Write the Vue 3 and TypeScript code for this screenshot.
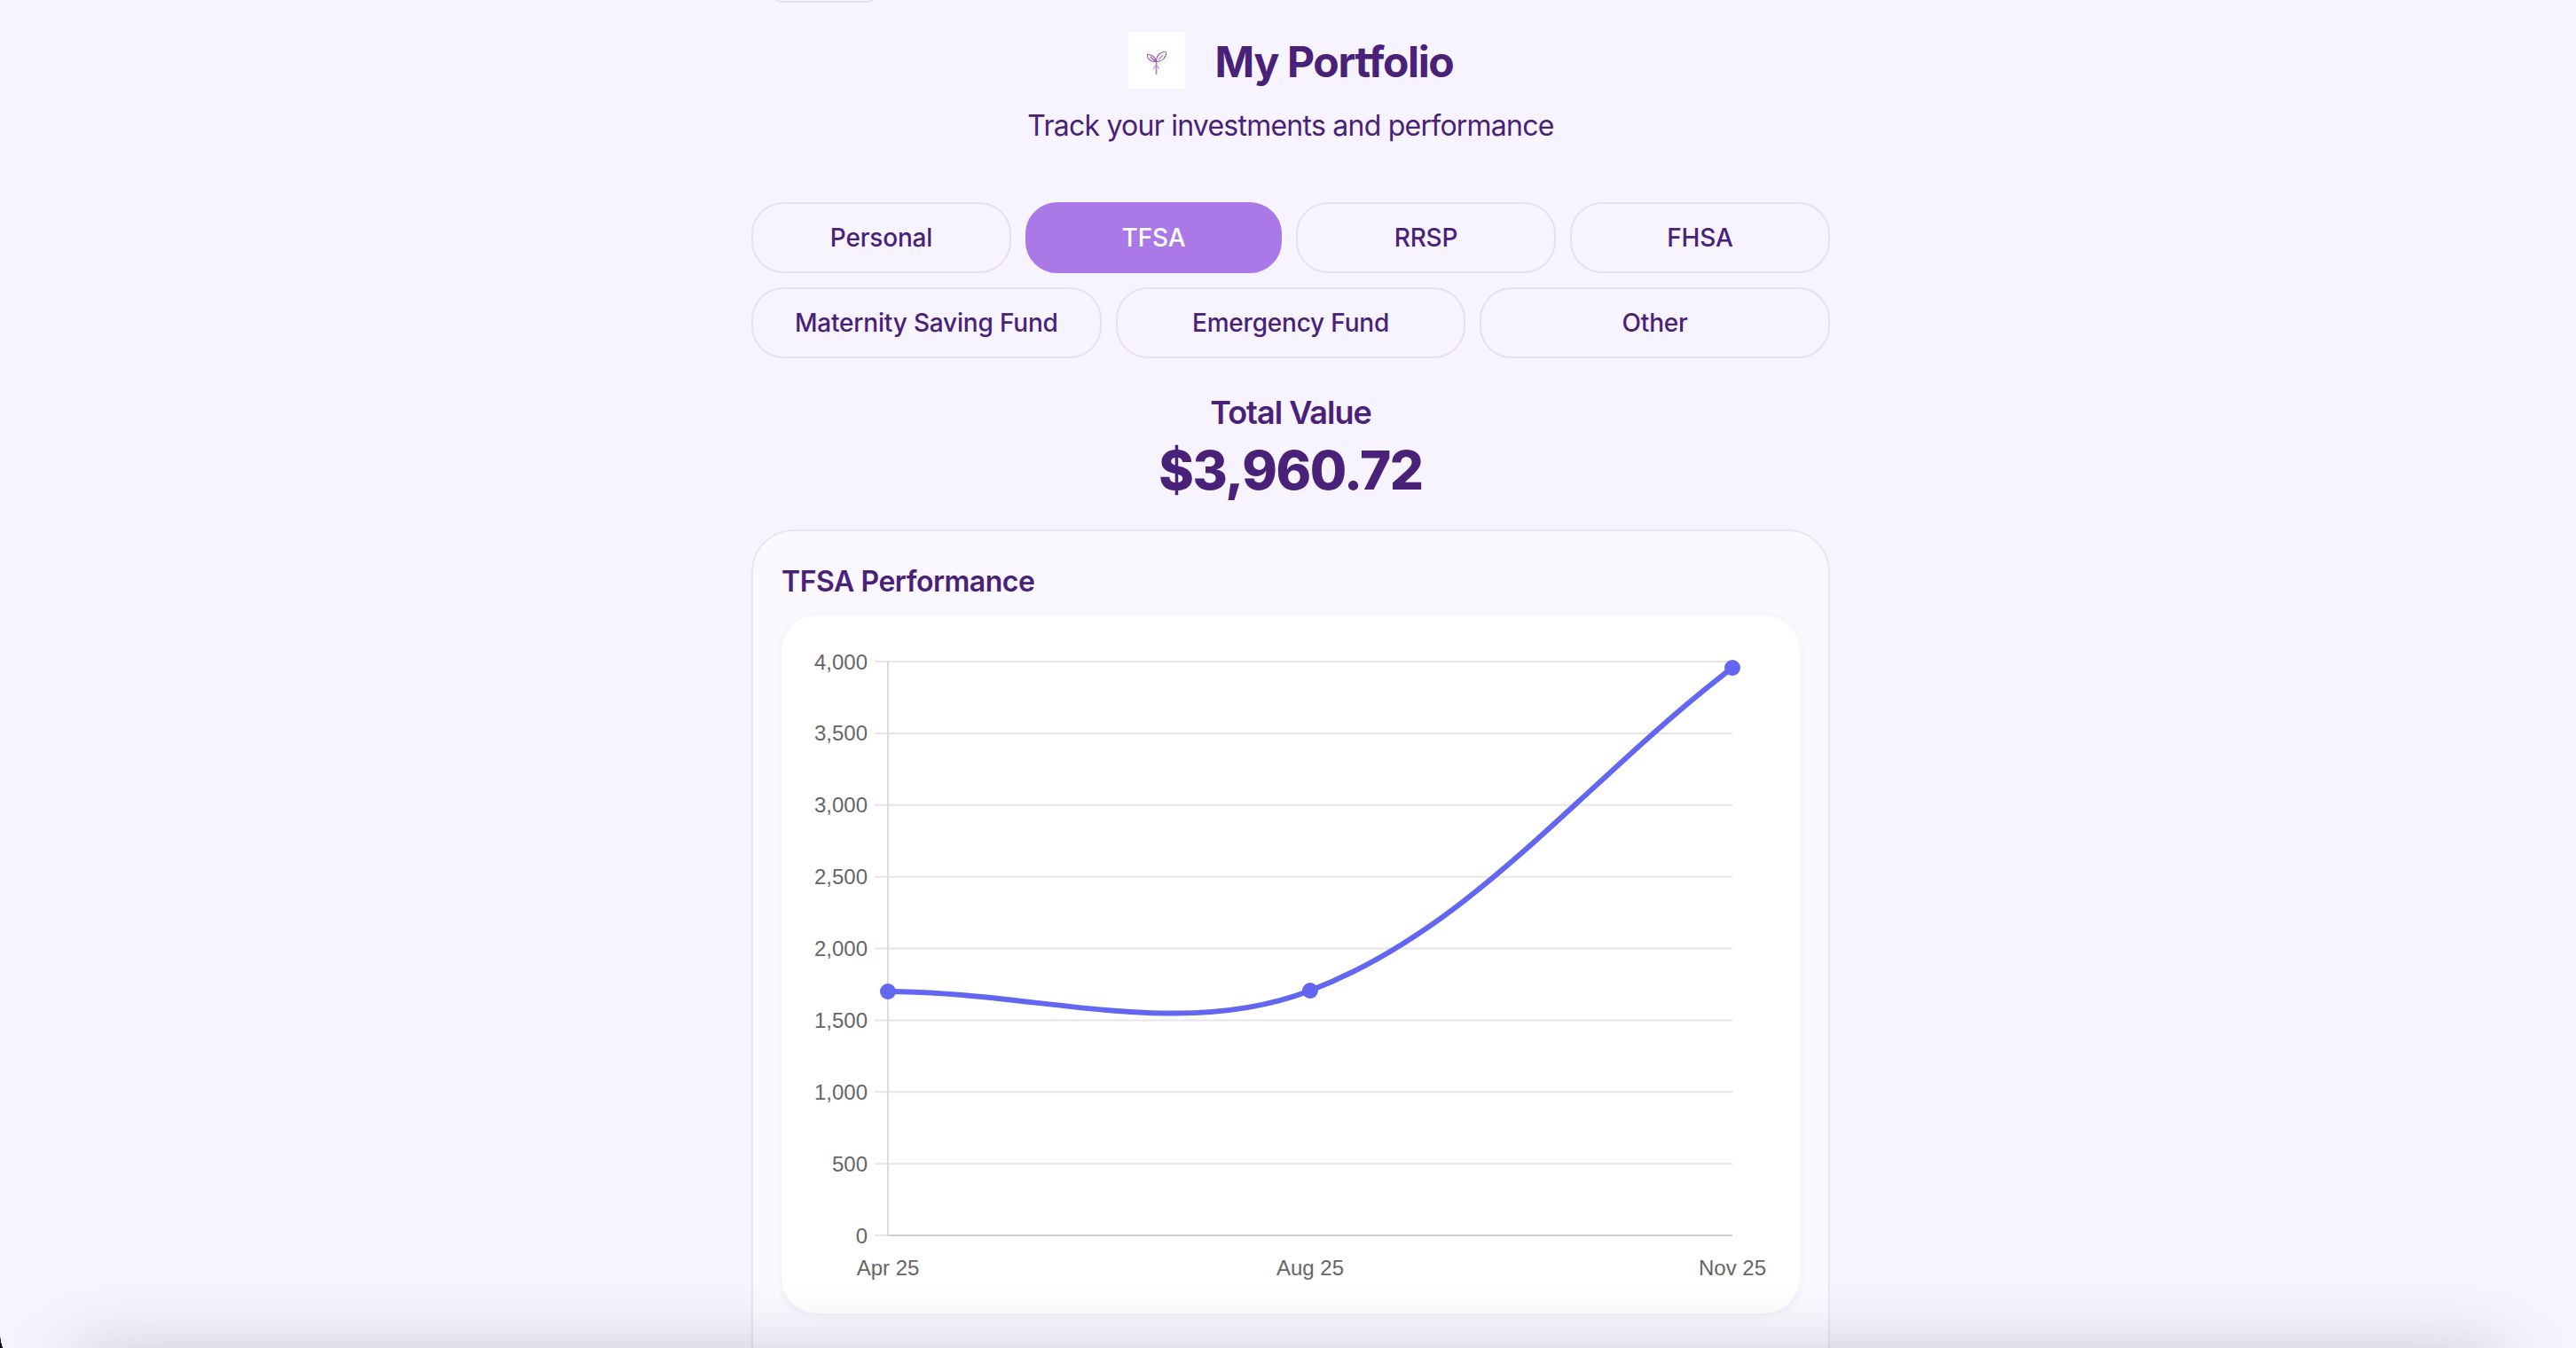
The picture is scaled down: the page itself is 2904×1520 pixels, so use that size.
<script setup lang="ts">
const rowOne = [
  { label: 'Personal', cls: 'w-personal' },
  { label: 'TFSA', cls: 'w-tfsa', active: true },
  { label: 'RRSP', cls: 'w-rrsp' },
  { label: 'FHSA', cls: 'w-fhsa' },
]
const rowTwo = [
  { label: 'Maternity Saving Fund', cls: 'w-third' },
  { label: 'Emergency Fund', cls: 'w-third' },
  { label: 'Other', cls: 'w-third' },
]
const left = 120
const right = 1072
const plotTop = 52
const plotBottom = 699
const step = (plotBottom - plotTop) / 8
const yTicks = ['4,000', '3,500', '3,000', '2,500', '2,000', '1,500', '1,000', '500', '0'].map((label, i) => ({
  label,
  y: plotTop + step * i,
}))
const xTicks = [
  { label: 'Apr 25', x: 120 },
  { label: 'Aug 25', x: 596 },
  { label: 'Nov 25', x: 1072 },
]
const points = [
  { x: 120, y: 424 },
  { x: 596, y: 423 },
  { x: 1072, y: 59 },
]
const curve = 'M120 424 C287 424 448 480 596 423 C782 352 905 186 1072 59'
</script>

<template>
  <div class="page">
    <main class="column">
      <div class="stub"></div>
      <header class="head">
        <div class="brand">
          <div class="logo">
            <svg class="sprout" width="22" height="26" viewBox="0 0 22 26" fill="none" stroke="#9a4fa8" stroke-width="1.100" stroke-linecap="round" stroke-linejoin="round">
              <path d="M10.500 26V11" stroke="#b985c4" stroke-width="1.800" />
              <path d="M7.500 19l3-3.500 3 3.500" stroke="#b985c4" />
              <path d="M10 11.500C9.500 6 5 3 0 3.500C0.500 8 4 12 10 11.500Z" />
              <path d="M10.500 11.500C10 5 14.500 0.500 22 0C22 6 18 11.500 10.500 11.500Z" />
              <path d="M4 6l4.500 4.500M13.500 9l4-4.500" />
            </svg>
          </div>
          <h1 class="title">My Portfolio</h1>
        </div>
        <p class="subtitle">Track your investments and performance</p>
      </header>

      <nav class="tabs">
        <div class="tab-row">
          <button v-for="t in rowOne" :key="t.label" class="tab" :class="[t.cls, { active: t.active }]">{{ t.label }}</button>
        </div>
        <div class="tab-row">
          <button v-for="t in rowTwo" :key="t.label" class="tab" :class="t.cls">{{ t.label }}</button>
        </div>
      </nav>

      <section class="total">
        <div class="total-label">Total Value</div>
        <div class="total-value">$3,960.72</div>
      </section>

      <section class="card">
        <h2 class="card-title">TFSA Performance</h2>
        <div class="chart">
          <svg class="plot" width="1147" height="787" viewBox="0 0 1147 787">
            <line v-for="t in yTicks.slice(0, 8)" :key="t.label" :x1="left - 15" :x2="right" :y1="t.y" :y2="t.y" class="grid" />
            <line :x1="left - 15" :x2="left" :y1="plotBottom" :y2="plotBottom" class="grid" />
            <line :x1="left" :x2="right" :y1="plotBottom" :y2="plotBottom" class="axis-x" />
            <line :x1="left" :x2="left" :y1="plotTop" :y2="plotBottom" class="axis" />
            <text v-for="t in yTicks" :key="t.label" :x="left - 23" :y="t.y + 8.500" text-anchor="end" class="tick">{{ t.label }}</text>
            <text v-for="t in xTicks" :key="t.label" :x="t.x" y="744" text-anchor="middle" class="tick">{{ t.label }}</text>
            <path :d="curve" fill="none" stroke="#6366f1" stroke-width="6" />
            <circle v-for="p in points" :key="p.x" :cx="p.x" :cy="p.y" r="9" fill="#6366f1" />
          </svg>
        </div>
      </section>
    </main>
    <div class="dock"></div>
    <div class="corner"></div>
  </div>
</template>

<style>
html, body { margin: 0; background: #f7f4ff; }
</style>

<style scoped>
.page {
  position: relative;
  height: 1520px;
  overflow: hidden;
  background: #f7f4ff;
  font-family: Inter, "Noto Sans", sans-serif;
  color: #4a2178;
}
.column {
  width: 1216px;
  margin-left: 847px;
  display: flex;
  flex-direction: column;
}
.stub {
  width: 125px;
  height: 30px;
  margin-top: -27px;
  margin-left: 20px;
  box-sizing: border-box;
  border: 2px solid #e8dff0;
  border-radius: 16px;
}
.head {
  margin-top: 33px;
  display: flex;
  flex-direction: column;
  align-items: center;
}
.brand {
  display: flex;
  align-items: flex-start;
  gap: 34px;
}
.logo {
  width: 64px;
  height: 64px;
  background: #fff;
  display: flex;
  align-items: center;
  justify-content: center;
}
.sprout {
  margin-top: 5px;
}
.title {
  margin: 2px 0 0;
  font-size: 48px;
  line-height: 64px;
  font-weight: 700;
  letter-spacing: -1.350px;
}
.subtitle {
  margin: 18px 0 0;
  font-size: 32px;
  line-height: 44px;
  font-weight: 400;
  letter-spacing: -0.760px;
}
.tabs {
  margin-top: 64px;
  display: flex;
  flex-direction: column;
  gap: 16px;
}
.tab-row {
  display: flex;
  gap: 16px;
}
.tab {
  height: 80px;
  box-sizing: border-box;
  border: 2px solid #e8dff0;
  border-radius: 36px;
  background: transparent;
  color: #4a2178;
  font-family: inherit;
  font-size: 28px;
  font-weight: 500;
  letter-spacing: -0.200px;
  padding: 0;
}
.tab.active {
  background: #ab78e8;
  border-color: #ab78e8;
  color: #fff;
}
.w-personal { width: 293px; }
.w-tfsa { width: 289px; }
.w-rrsp { width: 293px; }
.w-fhsa { width: 293px; }
.w-third { flex: 1 1 0; }
.total {
  margin-top: 38px;
  text-align: center;
}
.total-label {
  font-size: 36px;
  line-height: 46px;
  font-weight: 600;
  letter-spacing: -1px;
}
.total-value {
  font-size: 60px;
  line-height: 84px;
  font-weight: 800;
  letter-spacing: -1.400px;
}
.card {
  margin-top: 25px;
  box-sizing: border-box;
  height: 1000px;
  padding: 35px 32px 0;
  background: #fbf9ff;
  border: 2px solid #e8e6ee;
  border-radius: 48px;
}
.card-title {
  margin: 0;
  font-size: 32px;
  line-height: 44px;
  font-weight: 600;
  letter-spacing: -0.460px;
}
.chart {
  margin-top: 16px;
  height: 787px;
  background: #fff;
  border-radius: 40px;
  box-shadow: 0 2px 10px rgba(74, 33, 120, 0.07);
}
.plot { display: block; }
.grid { stroke: #e6e6e9; stroke-width: 2; }
.axis { stroke: #dcdcdf; stroke-width: 2; }
.axis-x { stroke: #cfcfd4; stroke-width: 2; }
.tick {
  font-family: "Liberation Sans", Arial, sans-serif;
  font-size: 24px;
  fill: #666;
}
.dock {
  position: absolute;
  left: 80px;
  right: 80px;
  bottom: -70px;
  height: 60px;
  border-radius: 60px;
  box-shadow: 0 0 80px rgba(50, 40, 70, 0.28);
}
.corner {
  position: absolute;
  left: 0;
  bottom: 0;
  width: 4px;
  height: 15px;
  background: radial-gradient(circle 39px at 39px 0, transparent 38.500px, #111 39px);
}
</style>
